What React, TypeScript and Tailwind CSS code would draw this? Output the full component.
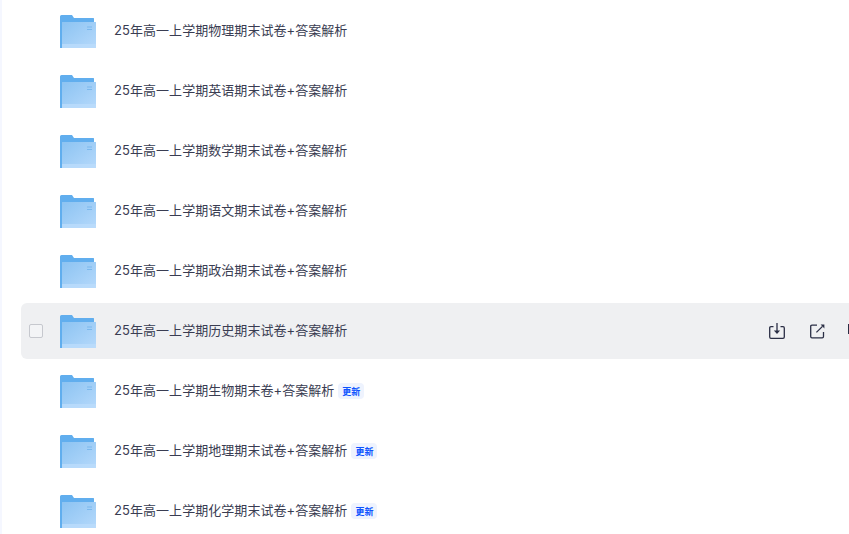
const rows: { name: string; badge?: boolean; hover?: boolean }[] = [
  { name: "25年高一上学期物理期末试卷+答案解析" },
  { name: "25年高一上学期英语期末试卷+答案解析" },
  { name: "25年高一上学期数学期末试卷+答案解析" },
  { name: "25年高一上学期语文期末试卷+答案解析" },
  { name: "25年高一上学期政治期末试卷+答案解析" },
  { name: "25年高一上学期历史期末试卷+答案解析", hover: true },
  { name: "25年高一上学期生物期末卷+答案解析", badge: true },
  { name: "25年高一上学期地理期末试卷+答案解析", badge: true },
  { name: "25年高一上学期化学期末试卷+答案解析", badge: true },
];

function Folder() {
  return (
    <svg width="36" height="34" viewBox="0 0 36 34" className="shrink-0 mt-[2px]">
      <defs>
        <linearGradient id="fg" x1="0" y1="0" x2="1" y2="1">
          <stop offset="0" stopColor="#8cc3f2" />
          <stop offset="1" stopColor="#b5d9fb" />
        </linearGradient>
      </defs>
      <path d="M0 1.5Q0 0 1.5 0H12L14 3H33.5Q34 3 34 4V8H2V33H0Z" fill="#61aeee" />
      <path d="M2 7H36V33H2Z" fill="url(#fg)" />
      <path d="M2 29H36V33H2Z" fill="#bcdcfb" opacity="0.8" />
      <path d="M27 11.5H32V12.5H27ZM27 14H32V15H27Z" fill="#7ab8ee" />
    </svg>
  );
}

function DownloadIcon() {
  return (
    <svg width="16" height="16" viewBox="0 0 16 16" fill="none" stroke="#2a2e45" strokeWidth="1.3" className="shrink-0">
      <path d="M4.5 3.6H2Q.7 3.6 .7 4.9V14Q.7 15.3 2 15.3H14Q15.3 15.3 15.3 14V4.9Q15.3 3.6 14 3.6H11.5" />
      <path d="M8 0V8" />
      <path d="M4.9 7.4H11.1L8 11Z" fill="#2a2e45" stroke="none" />
    </svg>
  );
}

function ShareIcon() {
  return (
    <svg width="15" height="15" viewBox="0 0 15 15" fill="none" stroke="#2a2e45" strokeWidth="1.3" className="shrink-0">
      <path d="M7 1.2H2Q.7 1.2 .7 2.5V12.5Q.7 13.8 2 13.8H12.2Q13.5 13.8 13.5 12.5V8" />
      <path d="M6.4 8.4L12.5 2.4" />
      <path d="M10.6 .6H14.4V4.4Z" fill="#2a2e45" stroke="none" />
    </svg>
  );
}

export default function App() {
  return (
    <div className="h-[534px] w-[849px] overflow-hidden bg-white flex font-['Inter','Noto_Sans_CJK_SC',sans-serif]">
      <div className="w-[2px] shrink-0 bg-[#f5f7ff]" />
      <div className="flex-1 min-w-0 pt-[3px] pl-[19px] flex flex-col gap-1">
        {rows.map((r) => (
          <div
            key={r.name}
            className={`h-14 shrink-0 flex items-center rounded-l-md w-[900px] ${r.hover ? "bg-[#eff0f2]" : ""}`}
          >
            <div className="w-[39px] shrink-0 pl-2">
              {r.hover && (
                <div className="size-[14px] rounded-[2px] border border-[#c6c8ce] bg-[#f3f4f6]" />
              )}
            </div>
            <Folder />
            <span className="ml-[18px] mb-[2px] text-[13px] leading-5 text-[#3a3d52] whitespace-nowrap tracking-[0.05px]">
              {r.name}
            </span>
            {r.badge && (
              <span className="ml-[4px] h-[16px] w-[26px] pt-[2px] flex items-center justify-center rounded-[4px] bg-[#eef3fe] text-[9px] font-bold text-[#0d53ff]">
                更新
              </span>
            )}
            {r.hover && (
              <div className="ml-[422px] flex items-center gap-[25px]">
                <DownloadIcon />
                <ShareIcon />
                <div className="ml-[-2px] w-[2px] h-[10px] mb-[4px] bg-[#2a2e45]" />
              </div>
            )}
          </div>
        ))}
      </div>
    </div>
  );
}
